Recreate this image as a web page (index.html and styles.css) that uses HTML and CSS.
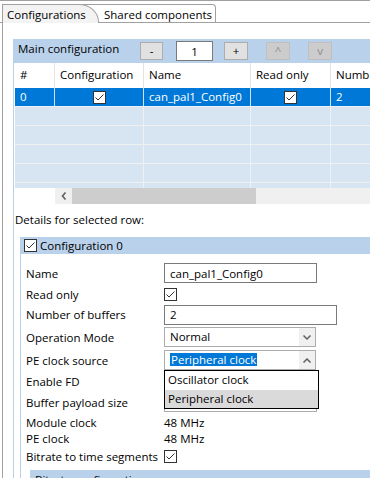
FILE: index.html
```html
<!DOCTYPE html>
<html lang="en">
<head>
    <meta charset="UTF-8">
    <meta name="viewport" content="width=device-width, initial-scale=1.0">
    <title>Configurations</title>
    <link rel="stylesheet" href="styles.css">
</head>
<body>
    <div class="window">
        <div class="tabs">
            <div class="tab tab-active">Configurations</div>
            <div class="tab tab-shared">Shared components</div>
        </div>

        <div class="tab-page">
            <div class="group">
                <div class="main-header">
                    <span class="main-title">Main configuration</span>
                    <button class="btn">-</button>
                    <input class="counter" type="text" value="1">
                    <button class="btn btn-plus">+</button>
                    <button class="btn btn-up" disabled>^</button>
                    <button class="btn btn-down" disabled>v</button>
                </div>

                <div class="grid-wrap">
                    <div class="grid">
                        <div class="grid-row grid-head">
                            <div class="cell">#</div>
                            <div class="cell">Configuration</div>
                            <div class="cell">Name</div>
                            <div class="cell">Read only</div>
                            <div class="cell">Number of buffers</div>
                        </div>
                        <div class="grid-row grid-selected">
                            <div class="cell">0</div>
                            <div class="cell cell-check">
                                <svg width="13" height="13" viewBox="0 0 13 13"><rect x="0.5" y="0.5" width="12" height="12" fill="#fff" stroke="#333"/><path d="M2.5 6.5 L5 9 L10.5 3.5" fill="none" stroke="#333"/></svg>
                            </div>
                            <div class="cell">can_pal1_Config0</div>
                            <div class="cell cell-check">
                                <svg width="13" height="13" viewBox="0 0 13 13"><rect x="0.5" y="0.5" width="12" height="12" fill="#fff" stroke="#333"/><path d="M2.5 6.5 L5 9 L10.5 3.5" fill="none" stroke="#333"/></svg>
                            </div>
                            <div class="cell">2</div>
                        </div>
                        <div class="grid-row grid-empty"><div class="cell cell-wide"></div><div class="cell"></div><div class="cell"></div><div class="cell"></div></div>
                        <div class="grid-row grid-empty"><div class="cell cell-wide"></div><div class="cell"></div><div class="cell"></div><div class="cell"></div></div>
                        <div class="grid-row grid-empty"><div class="cell cell-wide"></div><div class="cell"></div><div class="cell"></div><div class="cell"></div></div>
                        <div class="grid-row grid-empty"><div class="cell cell-wide"></div><div class="cell"></div><div class="cell"></div><div class="cell"></div></div>
                        <div class="grid-row grid-empty"><div class="cell cell-wide"></div><div class="cell"></div><div class="cell"></div><div class="cell"></div></div>
                    </div>
                </div>

                <div class="hscroll">
                    <div class="hscroll-arrow">
                        <svg width="6" height="8" viewBox="0 0 6 8"><path d="M4.5 0.5 L1.5 4 L4.5 7.5" fill="none" stroke="#606060" stroke-width="1.6"/></svg>
                    </div>
                    <div class="hscroll-thumb"></div>
                </div>

                <div class="details-label">Details for selected row:</div>

                <div class="config-group">
                    <div class="group-header">
                        <svg width="13" height="13" viewBox="0 0 13 13"><rect x="0.5" y="0.5" width="12" height="12" fill="#fff" stroke="#333"/><path d="M2.5 6.5 L5 9 L10.5 3.5" fill="none" stroke="#333"/></svg>
                        <span>Configuration 0</span>
                    </div>

                    <div class="props">
                        <div class="prop prop-name">
                            <span class="prop-label">Name</span>
                            <input class="field field-name" type="text" value="can_pal1_Config0">
                        </div>
                        <div class="prop prop-readonly">
                            <span class="prop-label">Read only</span>
                            <svg width="13" height="13" viewBox="0 0 13 13"><rect x="0.5" y="0.5" width="12" height="12" fill="#fff" stroke="#333"/><path d="M2.5 6.5 L5 9 L10.5 3.5" fill="none" stroke="#333"/></svg>
                        </div>
                        <div class="prop prop-buffers">
                            <span class="prop-label">Number of buffers</span>
                            <input class="field field-buffers" type="text" value="2">
                        </div>
                        <div class="prop prop-mode">
                            <span class="prop-label">Operation Mode</span>
                            <div class="combo">
                                <span class="combo-text">Normal</span>
                                <span class="combo-arrow">
                                    <svg width="8" height="5" viewBox="0 0 8 5"><path d="M0.5 0.5 L4 4 L7.5 0.5" fill="none" stroke="#606060" stroke-width="1.5"/></svg>
                                </span>
                            </div>
                        </div>
                        <div class="prop prop-source">
                            <span class="prop-label">PE clock source</span>
                            <div class="combo combo-open">
                                <span class="combo-text"><span class="combo-selected">Peripheral clock</span></span>
                                <span class="combo-arrow">
                                    <svg width="8" height="5" viewBox="0 0 8 5"><path d="M0.5 4.5 L4 1 L7.5 4.5" fill="none" stroke="#606060" stroke-width="1.5"/></svg>
                                </span>
                                <ul class="combo-list">
                                    <li>Oscillator clock</li>
                                    <li class="combo-hover">Peripheral clock</li>
                                </ul>
                            </div>
                        </div>
                        <div class="prop prop-fd">
                            <span class="prop-label">Enable FD</span>
                        </div>
                        <div class="prop prop-payload">
                            <span class="prop-label">Buffer payload size</span>
                            <div class="field field-payload"></div>
                        </div>
                        <div class="prop prop-module">
                            <span class="prop-label">Module clock</span>
                            <span>48 MHz</span>
                        </div>
                        <div class="prop prop-pe">
                            <span class="prop-label">PE clock</span>
                            <span>48 MHz</span>
                        </div>
                        <div class="prop prop-bitrate">
                            <span class="prop-label">Bitrate to time segments</span>
                            <svg width="13" height="13" viewBox="0 0 13 13"><rect x="0.5" y="0.5" width="12" height="12" fill="#fff" stroke="#333"/><path d="M2.5 6.5 L5 9 L10.5 3.5" fill="none" stroke="#333"/></svg>
                        </div>

                        <div class="sub-group">
                            <div class="sub-header">Bitrate configuration</div>
                        </div>
                    </div>
                </div>
            </div>
        </div>
    </div>
</body>
</html>
```

FILE: styles.css
```css
body {
    margin: 0;
    font-family: "Open Sans", "Noto Sans", sans-serif;
    font-size: 11.5px;
    color: #000;
    background-color: #fff;
}

.window {
    width: 370px;
    height: 478px;
    overflow: hidden;
    border-top: 1px solid #a0a0a0;
    box-sizing: border-box;
}

/* tab strip */
.tabs {
    display: flex;
    align-items: flex-end;
    height: 21px;
    padding-left: 2px;
    border-bottom: 1px solid #a0a0a0;
}

.tab {
    box-sizing: border-box;
    border: 1px solid #a0a0a0;
    border-bottom: none;
    line-height: 16px;
    padding-top: 2px;
    white-space: nowrap;
}

.tab-active {
    position: relative;
    z-index: 1;
    width: 97px;
    height: 19px;
    margin-bottom: -1px;
    padding-left: 4px;
    background-color: #f3f3f3;
    border-top-right-radius: 20px 18px;
}

.tab-shared {
    height: 18px;
    margin-left: -19px;
    padding-left: 23px;
    padding-right: 3px;
    background-color: #fff;
    border-top-right-radius: 4px;
}

.tab-page {
    margin-left: 2px;
    border-left: 1px solid #a0a0a0;
    padding-top: 16px;
    padding-left: 10px;
    height: 460px;
}

.group {
    border-left: 1px solid #b9d1ea;
    height: 100%;
}

/* main configuration bar */
.main-header {
    display: flex;
    align-items: flex-start;
    height: 24px;
    box-sizing: border-box;
    margin-left: -1px;
    padding-top: 3px;
    padding-left: 5px;
    background-color: #b9d1ea;
}

.main-title {
    width: 122px;
    line-height: 16px;
    margin-top: -1px;
    white-space: nowrap;
}

.btn {
    box-sizing: border-box;
    width: 23px;
    height: 18px;
    padding: 0;
    border: 1px solid #adadad;
    background-color: #e1e1e1;
    font: inherit;
    line-height: 14px;
    color: #000;
}

.btn-plus {
    width: 24px;
    margin-left: 11px;
}

.btn-up,
.btn-down {
    width: 24px;
    margin-left: 18px;
    background-color: #cccccc;
    border-color: #bfbfbf;
    color: #8c8c8c;
}

.counter {
    box-sizing: border-box;
    width: 37px;
    height: 20px;
    margin-top: -1px;
    margin-left: 13px;
    padding: 0;
    border: 1px solid #7a7a7a;
    background-color: #fff;
    font: inherit;
    text-align: center;
}

/* data grid */
.grid-wrap {
    margin-left: 1px;
    height: 125px;
    overflow: hidden;
}

.grid {
    width: 420px;
}

.grid-row {
    display: grid;
    grid-template-columns: 40px 89px 107px 80px 104px;
}

.cell {
    box-sizing: border-box;
    padding-left: 5px;
    border-right: 1px solid #f0f0f0;
    white-space: nowrap;
    overflow: hidden;
}

.grid-head {
    height: 25px;
    line-height: 24px;
    background-color: #fff;
}

.grid-head .cell {
    border-right-color: #e3e3e3;
}

.grid-selected,
.grid-empty {
    height: 19px;
    box-sizing: border-box;
    border-bottom: 1px solid #f0f0f0;
    line-height: 18px;
}

.grid-selected {
    background-color: #0078d7;
    color: #fff;
}

.grid-selected .cell {
    border-right-color: #cfe3f5;
}

.grid-empty {
    background-color: #d7e4f2;
}

.cell-wide {
    grid-column: span 2;
}

.cell-check {
    display: flex;
    align-items: center;
    justify-content: center;
    padding-left: 0;
}

.hscroll {
    display: flex;
    height: 16px;
    margin-left: 41px;
    background-color: #f0f0f0;
}

.hscroll-arrow {
    display: flex;
    align-items: center;
    justify-content: center;
    width: 17px;
}

.hscroll-thumb {
    width: 184px;
    background-color: #cdcdcd;
}

.details-label {
    margin-top: 8px;
    padding-left: 1px;
    line-height: 16px;
}

/* configuration 0 group */
.config-group {
    margin-left: 6px;
    margin-top: 9px;
    border-left: 1px solid #b9d1ea;
}

.group-header {
    display: flex;
    align-items: center;
    gap: 3px;
    height: 17px;
    margin-left: -1px;
    padding-left: 4px;
    background-color: #b9d1ea;
}

.props {
    padding-top: 7px;
    padding-left: 5px;
}

.prop {
    display: flex;
    align-items: center;
    height: 18px;
}

.prop-label {
    width: 138px;
    flex-shrink: 0;
    white-space: nowrap;
}

.prop-name { height: 24px; }
.prop-readonly { height: 18px; }
.prop-buffers { height: 23px; }
.prop-mode { height: 22px; }
.prop-source { height: 24px; }
.prop-fd { height: 18px; }
.prop-payload { height: 24px; }
.prop-module { height: 16px; }
.prop-pe { height: 17px; }
.prop-bitrate { height: 18px; }

.field {
    box-sizing: border-box;
    height: 20px;
    padding: 0 0 0 5px;
    border: 1px solid #7a7a7a;
    background-color: #fff;
    font: inherit;
    color: #000;
}

.field-name {
    width: 153px;
}

.field-buffers {
    width: 173px;
}

.field-payload {
    width: 153px;
    height: 19px;
    border-color: #acacac;
}

.combo {
    position: relative;
    display: flex;
    box-sizing: border-box;
    width: 152px;
    height: 20px;
    border: 1px solid #acacac;
    background-color: #fff;
}

.combo-text {
    flex: 1;
    padding-left: 5px;
    line-height: 18px;
}

.combo-selected {
    display: inline-block;
    line-height: 13px;
    padding: 0 1px;
    background-color: #0078d7;
    color: #fff;
}

.combo-arrow {
    display: flex;
    align-items: center;
    justify-content: center;
    width: 16px;
    background-color: #f0f0f0;
}

.combo-list {
    position: absolute;
    top: 19px;
    left: -1px;
    z-index: 2;
    box-sizing: border-box;
    width: 155px;
    margin: 0;
    padding: 0;
    list-style: none;
    border: 1px solid #000;
    background-color: #fff;
}

.combo-list li {
    height: 18.5px;
    line-height: 17px;
    padding-left: 3px;
}

.combo-list .combo-hover {
    background-color: #dadada;
}

.sub-group {
    margin-top: 5px;
    margin-left: 4px;
}

.sub-header {
    height: 20px;
    line-height: 20px;
    padding-left: 5px;
    background-color: #b9d1ea;
}
```
